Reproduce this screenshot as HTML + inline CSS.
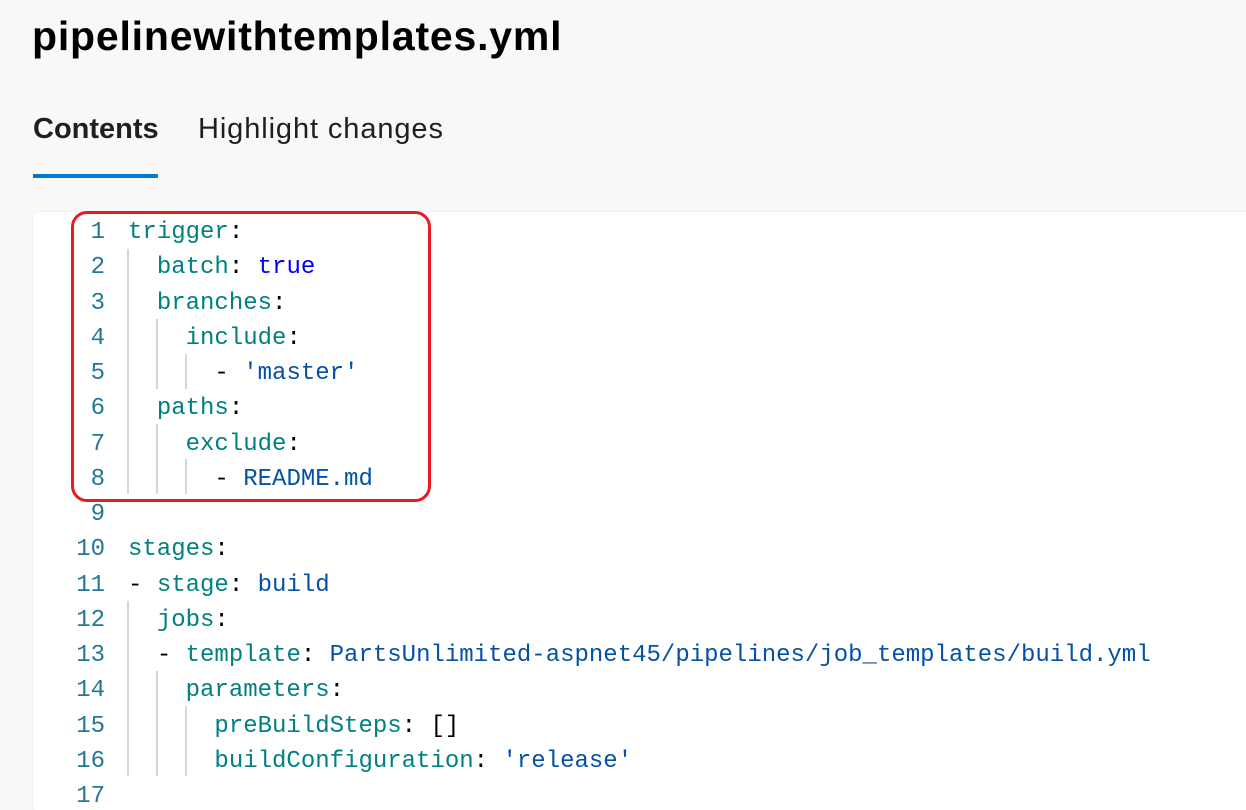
<!DOCTYPE html>
<html><head><style>
html,body{margin:0;width:1246px;height:810px;overflow:hidden}
body{background:#f8f8f8;position:relative;font-family:"Liberation Sans",sans-serif;}
.title{position:absolute;left:32px;top:13px;font-size:41px;font-weight:bold;color:#000;letter-spacing:0.8px}
.tab{position:absolute;top:113px;font-size:29px;color:#201f1e}
.ul{position:absolute;left:33px;top:174px;width:125px;height:4px;background:#0078d4}
.card{position:absolute;left:33px;top:212px;width:1230px;height:600px;background:#fff;border-radius:6px;box-shadow:0 0 2px rgba(0,0,0,.08)}
.code{position:absolute;left:0;top:215px;font-family:"Liberation Mono",monospace;font-size:24px;line-height:35.25px;white-space:pre}
.ln{position:absolute;left:40px;width:65px;text-align:right;color:#237893}
.l{position:absolute;left:128px}
.k{color:#008080}.p{color:#000}.b{color:#0000ff}.s{color:#0451a5}
.g{position:absolute;width:2px;background:#d6d6d6}
.red{position:absolute;left:71px;top:211px;width:354px;height:285px;border:3px solid #e81b23;border-radius:16px}
</style></head><body>
<div class="title">pipelinewithtemplates.yml</div>
<div class="tab" style="left:33px;font-weight:bold">Contents</div>
<div class="tab" style="left:198px;letter-spacing:0.9px">Highlight changes</div>
<div class="ul"></div>
<div class="card"></div>
<div class="code">
<div class="ln" style="top:0">1</div><div class="l" style="top:0"><span class="k">trigger</span><span class="p">:</span></div>
<div class="ln" style="top:35.25px">2</div><div class="l" style="top:35.25px">  <span class="k">batch</span><span class="p">:</span> <span class="b">true</span></div>
<div class="ln" style="top:70.5px">3</div><div class="l" style="top:70.5px">  <span class="k">branches</span><span class="p">:</span></div>
<div class="ln" style="top:105.75px">4</div><div class="l" style="top:105.75px">    <span class="k">include</span><span class="p">:</span></div>
<div class="ln" style="top:141px">5</div><div class="l" style="top:141px">      <span class="p">-</span> <span class="s">'master'</span></div>
<div class="ln" style="top:176.25px">6</div><div class="l" style="top:176.25px">  <span class="k">paths</span><span class="p">:</span></div>
<div class="ln" style="top:211.5px">7</div><div class="l" style="top:211.5px">    <span class="k">exclude</span><span class="p">:</span></div>
<div class="ln" style="top:246.75px">8</div><div class="l" style="top:246.75px">      <span class="p">-</span> <span class="s">README.md</span></div>
<div class="ln" style="top:282px">9</div>
<div class="ln" style="top:317.25px">10</div><div class="l" style="top:317.25px"><span class="k">stages</span><span class="p">:</span></div>
<div class="ln" style="top:352.5px">11</div><div class="l" style="top:352.5px"><span class="p">-</span> <span class="k">stage</span><span class="p">:</span> <span class="s">build</span></div>
<div class="ln" style="top:387.75px">12</div><div class="l" style="top:387.75px">  <span class="k">jobs</span><span class="p">:</span></div>
<div class="ln" style="top:423px">13</div><div class="l" style="top:423px">  <span class="p">-</span> <span class="k">template</span><span class="p">:</span> <span class="s">PartsUnlimited-aspnet45/pipelines/job_templates/build.yml</span></div>
<div class="ln" style="top:458.25px">14</div><div class="l" style="top:458.25px">    <span class="k">parameters</span><span class="p">:</span></div>
<div class="ln" style="top:493.5px">15</div><div class="l" style="top:493.5px">      <span class="k">preBuildSteps</span><span class="p">:</span> <span class="p">[]</span></div>
<div class="ln" style="top:528.75px">16</div><div class="l" style="top:528.75px">      <span class="k">buildConfiguration</span><span class="p">:</span> <span class="s">'release'</span></div>
<div class="ln" style="top:564px">17</div>
</div>
<div class="g" style="left:127px;top:249px;height:245px"></div>
<div class="g" style="left:156px;top:319px;height:70px"></div>
<div class="g" style="left:185px;top:354px;height:35px"></div>
<div class="g" style="left:156px;top:424px;height:70px"></div>
<div class="g" style="left:185px;top:459px;height:35px"></div>
<div class="g" style="left:127px;top:601px;height:175px"></div>
<div class="g" style="left:156px;top:671px;height:105px"></div>
<div class="g" style="left:185px;top:706px;height:70px"></div>
<div class="red"></div>
</body></html>
